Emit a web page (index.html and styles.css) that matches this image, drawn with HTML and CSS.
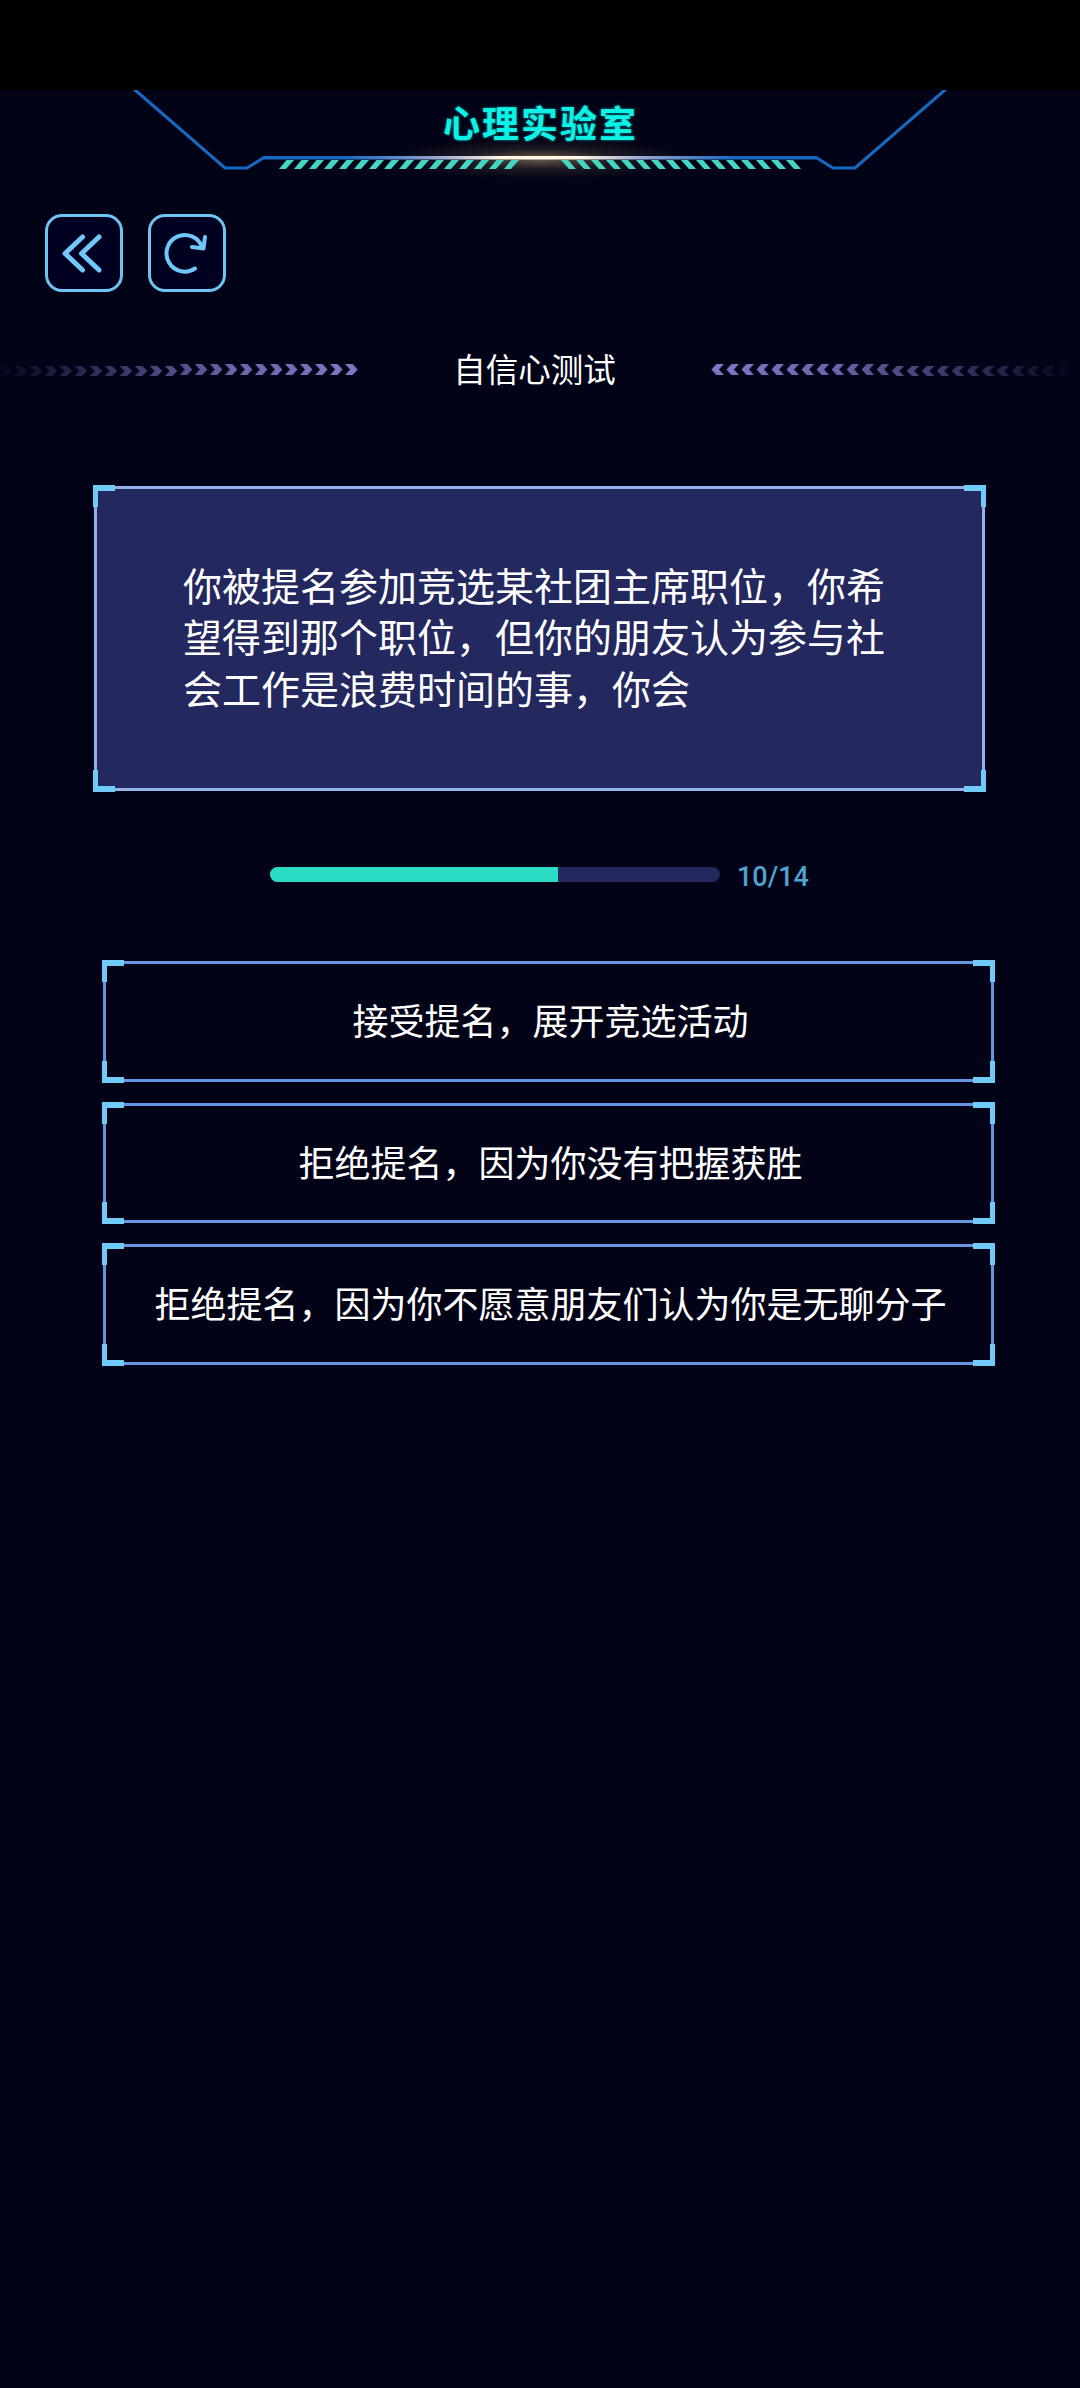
FILE: index.html
```
<!DOCTYPE html>
<html lang="zh-CN">
<head>
<meta charset="utf-8">
<title>心理实验室</title>
<link rel="stylesheet" href="styles.css">
</head>
<body>
<div class="statusbar"></div>
<header class="header">
  <svg class="header-frame" viewBox="0 0 1080 100" width="1080" height="100">
    <defs>
      <linearGradient id="beam" gradientUnits="userSpaceOnUse" x1="264" x2="816" y1="0" y2="0">
        <stop offset="0.15" stop-color="#1769c4"/><stop offset="0.3" stop-color="#8aa0cf"/><stop offset="0.43" stop-color="#fff6e4"/><stop offset="0.57" stop-color="#fff6e4"/><stop offset="0.7" stop-color="#8aa0cf"/><stop offset="0.85" stop-color="#1769c4"/>
      </linearGradient>
      <radialGradient id="glow"><stop offset="0" stop-color="#ffe0a0" stop-opacity="0.42"/><stop offset="0.5" stop-color="#d8b070" stop-opacity="0.13"/><stop offset="1" stop-color="#d8b070" stop-opacity="0"/></radialGradient>
      <pattern id="dashL" patternUnits="userSpaceOnUse" x="279" y="70" width="15" height="9"><path d="M0 9L7.500 0H15L7 9Z" fill="#45d6c2"/></pattern>
      <pattern id="dashR" patternUnits="userSpaceOnUse" x="561" y="70" width="15" height="9"><path d="M0 0H7L15 9H8Z" fill="#45d6c2"/></pattern>
    </defs>
    <ellipse cx="540" cy="69" rx="150" ry="20" fill="url(#glow)"/>
    <rect x="279" y="70" width="240" height="9" fill="url(#dashL)"/>
    <rect x="561" y="70" width="240" height="9" fill="url(#dashR)"/>
    <path d="M134 -1L225 78H247L264 67.500H816L833 78H855L946 -1" fill="none" stroke="#1769c4" stroke-width="3"/>
    <rect x="264" y="66" width="552" height="3.500" fill="url(#beam)"/>
  </svg>
  <h1 class="brand">心理实验室</h1>
</header>
<nav class="tools">
  <button class="tool" aria-label="返回"><svg viewBox="0 0 78 78" width="78" height="78"><path d="M37.500 23L20 39.500L37.500 56M54 23L36.500 39.500L54 56"/></svg></button>
  <button class="tool" aria-label="刷新"><svg viewBox="0 0 78 78" width="78" height="78"><path class="thin" d="M47 54.500A18.300 18.300 0 1 1 54 33M57 23L55.500 34.500L44 33"/></svg></button>
</nav>
<div class="section">
  <svg class="arrows" viewBox="0 0 360 20" width="360" height="20">
    <defs>
      <linearGradient id="fade"><stop offset="0" stop-color="#7b7bc8" stop-opacity="0.04"/><stop offset="0.65" stop-color="#7b7bc8" stop-opacity="0.83"/><stop offset="1" stop-color="#7b7bc8"/></linearGradient>
      <pattern id="chev" patternUnits="userSpaceOnUse" x="-0.600" y="4" width="15.030" height="11"><path d="M0 0H7.500L12.500 5.500L7.500 11H0L5 5.500Z" fill="#fff"/></pattern>
      <pattern id="chev2" patternUnits="userSpaceOnUse" x="-0.600" y="6" width="15.030" height="10"><path d="M0 0H7.500L12.500 5L7.500 10H0L5 5Z" fill="#fff"/></pattern>
      <mask id="chevrons"><rect x="0" y="6" width="178.500" height="10" fill="url(#chev2)"/><rect x="179" y="4" width="179" height="11" fill="url(#chev)"/></mask>
    </defs>
    <rect width="358" height="20" fill="url(#fade)" mask="url(#chevrons)"/>
  </svg>
  <h2 class="section-title">自信心测试</h2>
  <svg class="arrows flipped" viewBox="0 0 360 20" width="360" height="20"><rect width="358" height="20" fill="url(#fade)" mask="url(#chevrons)"/></svg>
</div>
<main class="quiz">
  <section class="frame question">
    <i class="corner tl"></i><i class="corner tr"></i><i class="corner bl"></i><i class="corner br"></i>
    <p class="question-text">你被提名参加竞选某社团主席职位，你希望得到那个职位，但你的朋友认为参与社会工作是浪费时间的事，你会</p>
  </section>
  <div class="progress">
    <div class="track"><div class="fill" style="width:64%"></div></div>
    <span class="count">10/14</span>
  </div>
  <div class="options">
    <button class="frame option"><i class="corner tl"></i><i class="corner tr"></i><i class="corner bl"></i><i class="corner br"></i><span class="label">接受提名，展开竞选活动</span></button>
    <button class="frame option"><i class="corner tl"></i><i class="corner tr"></i><i class="corner bl"></i><i class="corner br"></i><span class="label">拒绝提名，因为你没有把握获胜</span></button>
    <button class="frame option"><i class="corner tl"></i><i class="corner tr"></i><i class="corner bl"></i><i class="corner br"></i><span class="label">拒绝提名，因为你不愿意朋友们认为你是无聊分子</span></button>
  </div>
</main>
</body>
</html>
```
FILE: styles.css
```
* { box-sizing: border-box; margin: 0; padding: 0; }
body {
  width: 1080px;
  min-height: 2388px;
  background: #020317;
  color: #fff;
  font-family: "Noto Sans CJK SC", sans-serif;
}
button { background: none; border: 0; color: inherit; font: inherit; }
.statusbar { height: 90px; background: #000; }
.header { display: grid; height: 123px; }
.header-frame, .brand { grid-area: 1 / 1; }
.header-frame { overflow: hidden; }
.brand {
  justify-self: center;
  padding: 11px 0 0 1px;
  font-size: 37px;
  line-height: 42px;
  font-weight: 700;
  letter-spacing: 2px;
  color: #0cf2e6;
  text-shadow: 0 0 3px rgba(12, 242, 230, 0.6);
}
.tools { display: flex; gap: 25px; height: 79px; padding-left: 45px; margin-top: 1px; }
.tool {
  display: flex;
  width: 78px;
  height: 78px;
  border: 3px solid #70c4f2;
  border-radius: 17px;
  background: #000020;
}
.tool svg { flex: none; margin: -3px; fill: none; stroke: #70c8f8; stroke-width: 5; stroke-linecap: round; stroke-linejoin: round; }
.tool .thin { stroke-width: 4; }
.section { display: flex; justify-content: space-between; align-items: center; height: 60px; margin-top: 47px; padding-right: 11px; }
.flipped { transform: scaleX(-1); }
.section-title { padding-bottom: 4px; font-size: 32.500px; line-height: 48px; font-weight: 400; }
.quiz { padding: 84px 93px 0; }
.frame { position: relative; border: 3px solid #6595e3; }
.question {
  width: 891px;
  height: 305px;
  margin: 2px 0 0 1px;
  padding: 70px 80px 0 86px;
  background: #23285f;
  border-color: #94b2ea;
}
.question-text { width: 712px; font-size: 39px; line-height: 51.300px; }
.corner { position: absolute; width: 22px; height: 22px; border: 0 solid #70cbf8; }
.tl { left: -4px; top: -4px; border-width: 6px 0 0 5px; }
.tr { right: -4px; top: -4px; border-width: 6px 5px 0 0; }
.bl { left: -4px; bottom: -4px; border-width: 0 0 6px 5px; }
.br { right: -4px; bottom: -4px; border-width: 0 5px 6px 0; }
.progress { display: flex; align-items: center; height: 32px; margin: 67px 0 0 177px; }
.track { width: 450px; height: 15px; border-radius: 8px; background: #23285f; overflow: hidden; }
.fill { height: 100%; background: #2bdcc5; }
.count { padding: 5px 0 0 17px; font-family: Roboto, sans-serif; font-size: 27px; line-height: 32px; font-weight: 500; color: #4fa3cf; }
.options { display: flex; flex-direction: column; gap: 21px; margin: 71px 0 0 10px; width: 891px; }
.option { display: flex; align-items: center; justify-content: center; height: 120.500px; }
.label { padding: 0 0 4px 4px; font-size: 36px; line-height: 52px; white-space: nowrap; }
```
